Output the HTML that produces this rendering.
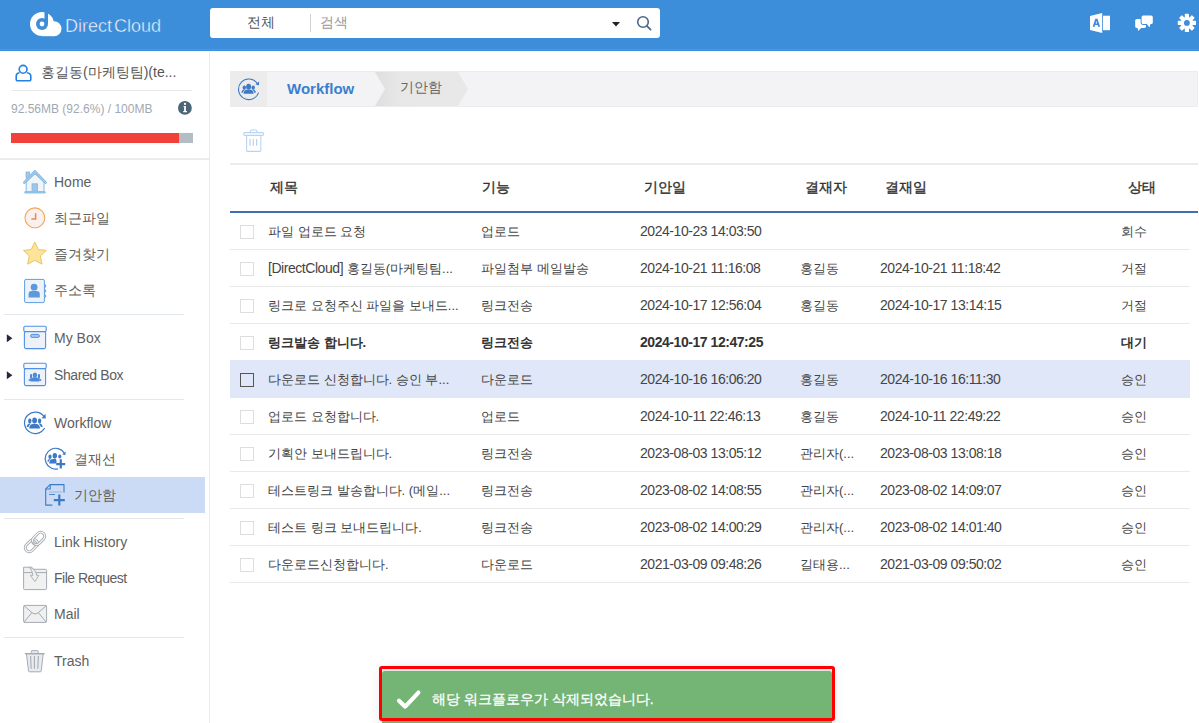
<!DOCTYPE html>
<html><head><meta charset="utf-8">
<style>
*{box-sizing:border-box}
html,body{margin:0;padding:0}
body{width:1199px;height:723px;overflow:hidden;position:relative;background:#fff;font-family:"Liberation Sans",sans-serif;color:#555}
.a{position:absolute}
svg{display:block}
#hdr{left:0;top:0;width:1199px;height:51px;background:#3c8dda}
#search{left:210px;top:8px;width:450px;height:30px;background:#fff;border-radius:3px}
.nw{white-space:nowrap;line-height:1}
#side{left:0;top:51px;width:210px;height:672px;border-right:1px solid #e9eaee}
.sep{position:absolute;height:1px;background:#e3e8ef}
.mi{position:absolute;left:54px;font-size:14px;color:#606060;white-space:nowrap;line-height:16px}
.row{position:absolute;left:230px;width:960px;height:37px;border-bottom:1px solid #e8e8e8}
.cell{position:absolute;top:11px;font-size:13px;color:#444;white-space:nowrap;line-height:15px}
.cb{position:absolute;left:240px;width:14px;height:14px;border:1px solid #dcdcdc;background:#fff}
.d{font-size:14px;letter-spacing:-0.45px}
.th{position:absolute;top:179px;font-size:14px;font-weight:normal;-webkit-text-stroke:0.4px #333;color:#333;white-space:nowrap;line-height:16px}
</style></head><body>

<!-- HEADER -->
<div id="hdr" class="a"></div>
<div class="a" style="left:0;top:49px;width:1199px;height:1px;background:#4b98de"></div>
<!-- logo -->
<svg class="a" style="left:0;top:0" width="70" height="50" viewBox="0 0 70 50">
  <g fill="#fff"><circle cx="42" cy="24" r="12"/><circle cx="54" cy="28.8" r="7.5"/><rect x="42" y="28" width="12" height="8.2"/></g>
  <rect x="44.5" y="8" width="3.5" height="16" fill="#3d8dda"/>
  <circle cx="42" cy="24" r="6" fill="#3d8dda"/>
  <circle cx="42" cy="24" r="2.4" fill="#fff"/>
</svg>
<div class="a nw" style="left:65px;top:17px;font-size:18px;color:#fff;letter-spacing:0px;-webkit-text-stroke:0.5px #3c8dda">Direct<span style="margin-left:2px"></span>Cloud</div>
<div id="search" class="a"></div>
<div class="a nw" style="left:247px;top:15px;font-size:14px;color:#555">전체</div>
<div class="a" style="left:310px;top:14px;width:1px;height:18px;background:#d0d0d0"></div>
<div class="a nw" style="left:320px;top:15px;font-size:14px;color:#999">검색</div>
<svg class="a" style="left:611px;top:21px" width="10" height="6" viewBox="0 0 10 6"><path d="M1 1 L9 1 L5 5.5Z" fill="#222"/></svg>
<svg class="a" style="left:635px;top:14px" width="18" height="18" viewBox="0 0 18 18"><circle cx="8" cy="8" r="5.3" fill="none" stroke="#4b6687" stroke-width="1.6"/><path d="M11.8 11.8 L15.6 15.6" stroke="#4b6687" stroke-width="1.7" stroke-linecap="round"/></svg>
<!-- right icons -->
<svg class="a" style="left:1089px;top:12px" width="22" height="22" viewBox="0 0 22 22">
  <path d="M1 3.9 L13.2 1 L13.2 20.9 L1 18Z" fill="#fff"/>
  <rect x="14" y="3.7" width="7" height="14.5" fill="#fff"/>
  <path fill-rule="evenodd" d="M3.7 14.7 L6.3 6.8 L8.5 6.8 L11.1 14.7 L9.1 14.7 L8.6 13 L6.2 13 L5.7 14.7Z M6.7 11.4 L8.1 11.4 L7.4 9Z" fill="#3c8dda"/>
</svg>
<svg class="a" style="left:1134px;top:14px" width="22" height="20" viewBox="0 0 22 20">
  <rect x="1.2" y="5" width="10.8" height="8.9" rx="1.6" fill="#fff"/>
  <path d="M3.4 13.5 L4.3 17 L7.6 13.5Z" fill="#fff"/>
  <rect x="6.6" y="0.5" width="13.2" height="10.5" rx="2.4" fill="#3c8dda"/>
  <path d="M11.2 9.5 L15.6 15 L17.6 9.5Z" fill="#3c8dda"/>
  <rect x="7.6" y="1.5" width="11.2" height="8.5" rx="1.6" fill="#fff"/>
  <path d="M12.4 9.6 L15.5 13.4 L16.6 9.6Z" fill="#fff"/>
</svg>
<svg class="a" style="left:1177px;top:13px" width="20" height="20" viewBox="0 0 20 20">
  <g fill="#fff" transform="translate(-0.1 -0.1)">
  <circle cx="10" cy="10" r="6.2"/>
  <rect x="7.9" y="0.9" width="4.2" height="4" rx="0.6"/>
  <rect x="7.9" y="15.1" width="4.2" height="4" rx="0.6"/>
  <rect x="0.9" y="7.9" width="4" height="4.2" rx="0.6"/>
  <rect x="15.1" y="7.9" width="4" height="4.2" rx="0.6"/>
  <rect x="7.9" y="0.9" width="4.2" height="4" rx="0.6" transform="rotate(45 10 10)"/>
  <rect x="7.9" y="15.1" width="4.2" height="4" rx="0.6" transform="rotate(45 10 10)"/>
  <rect x="0.9" y="7.9" width="4" height="4.2" rx="0.6" transform="rotate(45 10 10)"/>
  <rect x="15.1" y="7.9" width="4" height="4.2" rx="0.6" transform="rotate(45 10 10)"/>
  </g>
  <circle cx="9.9" cy="9.9" r="2.9" fill="#3c8dda"/>
</svg>

<!-- SIDEBAR -->
<div id="side" class="a"></div>
<!-- user -->
<svg class="a" style="left:10px;top:60px" width="30" height="30" viewBox="0 0 30 30">
  <circle cx="13.1" cy="9.3" r="3.9" fill="none" stroke="#2281e0" stroke-width="1.6"/>
  <path d="M9.5 12.8 Q6.2 13.2 6.2 16.2 L6.2 19.4 Q6.2 20.8 7.8 20.8 L19.2 20.8 Q20.8 20.8 20.8 19.4 L20.8 16.2 Q20.8 13.2 16.8 12.8" fill="none" stroke="#2281e0" stroke-width="1.6" stroke-linejoin="round"/>
</svg>
<div class="a nw" style="left:41px;top:64px;font-size:14px;color:#555;line-height:16px">홍길동(마케팅팀)(te...</div>
<div class="sep" style="left:12px;top:90px;width:180px;background:#e8e8e8"></div>
<div class="a nw" style="left:11px;top:102px;font-size:12px;color:#9fa9b4;line-height:14px">92.56MB (92.6%) / 100MB</div>
<svg class="a" style="left:177px;top:100px" width="16" height="16" viewBox="0 0 16 16">
  <circle cx="7.9" cy="7.9" r="6.9" fill="#4b6677"/>
  <circle cx="8" cy="3.9" r="1.1" fill="#fff"/>
  <path d="M6.6 6 L8.9 6 L8.9 11 L9.9 11 L9.9 12.2 L6.2 12.2 L6.2 11 L7.1 11 L7.1 7.1 L6.6 7.1Z" fill="#fff"/>
</svg>
<div class="a" style="left:11px;top:133px;width:182px;height:10px;background:#b4bcc4"></div>
<div class="a" style="left:11px;top:133px;width:168px;height:10px;background:#f2403a"></div>
<div class="a" style="left:0;top:158px;width:209px;height:2px;background:#eaebef"></div>

<!-- menu group 1 -->
<svg class="a" style="left:20px;top:166px" width="30" height="30" viewBox="0 0 30 30">
  <path d="M6.2 16 L6.2 25.5 L24 25.5 L24 16 L15 8Z" fill="#eff5fa" stroke="#86b8e2" stroke-width="1"/>
  <rect x="6" y="6" width="3.7" height="6" fill="#a3c9ea" stroke="#86b8e2" stroke-width="0.8"/>
  <path d="M4.3 16.6 L14.9 5.3 L25.6 16.6" fill="none" stroke="#86b8e2" stroke-width="2.6" stroke-linecap="round" stroke-linejoin="round"/>
  <path d="M4.3 16.6 L14.9 5.3 L25.6 16.6" fill="none" stroke="#b0d2ee" stroke-width="1" stroke-linecap="round" stroke-linejoin="round"/>
  <rect x="12" y="17.8" width="5.6" height="7.4" fill="#9ec6ea" stroke="#86b8e2" stroke-width="0.8"/>
  <rect x="4.3" y="25" width="21.4" height="2.6" rx="1.3" fill="#8fc0e6"/>
</svg>
<div class="mi" style="top:174px">Home</div>
<svg class="a" style="left:20px;top:202px" width="30" height="30" viewBox="0 0 30 30">
  <circle cx="14.9" cy="15.8" r="9.9" fill="#faf1ec" stroke="#f1a660" stroke-width="1.1"/>
  <path d="M15.6 11.2 L15.6 17 L11.4 17" fill="none" stroke="#e8845e" stroke-width="1.5"/>
</svg>
<div class="mi" style="top:210px">최근파일</div>
<svg class="a" style="left:20px;top:238px" width="30" height="30" viewBox="0 0 30 30">
  <path d="M14.8 4.2 L18.4 11.6 L26.3 12.4 L20.3 17.9 L22 26.2 L14.8 22.4 L7.6 26.2 L9.3 17.9 L3.4 12.4 L11.2 11.6Z" fill="#fee49a" stroke="#e9c660" stroke-width="1" stroke-linejoin="round"/>
</svg>
<div class="mi" style="top:246px">즐겨찾기</div>
<svg class="a" style="left:20px;top:275px" width="30" height="30" viewBox="0 0 30 30">
  <rect x="4.6" y="4.4" width="19.8" height="23.2" rx="1.5" fill="#eef3fa" stroke="#5e9de2" stroke-width="1"/>
  <path d="M24.6 9.5 q1.2 0 1.2 1.5 q0 1.5 -1.2 1.5 M24.6 14.5 q1.2 0 1.2 1.5 q0 1.5 -1.2 1.5 M24.6 19.5 q1.2 0 1.2 1.5 q0 1.5 -1.2 1.5" fill="none" stroke="#5e9de2" stroke-width="1"/>
  <circle cx="14.1" cy="12.2" r="3.4" fill="#5b98dc"/>
  <path d="M8.6 22.4 L8.6 19 Q8.6 16 11.6 16 L16.6 16 Q19.8 16 19.8 19 L19.8 22.4Z" fill="#5b98dc"/>
</svg>
<div class="mi" style="top:282px">주소록</div>
<div class="sep" style="left:4px;top:314px;width:180px"></div>

<!-- group 2 -->
<svg class="a" style="left:6px;top:334px" width="7" height="9" viewBox="0 0 7 9"><path d="M0.8 0.3 L6.4 4.3 L0.8 8.3Z" fill="#232a36"/></svg>
<svg class="a" style="left:20px;top:322px" width="30" height="30" viewBox="0 0 30 30">
  <rect x="4.4" y="9.4" width="21.2" height="17.2" rx="1.6" fill="#eef2f8" stroke="#4f92e2" stroke-width="1.1"/>
  <rect x="3.8" y="4.2" width="22.4" height="5.4" rx="1.4" fill="#f5f7fb" stroke="#4f92e2" stroke-width="1.1"/>
  <rect x="10.6" y="12.4" width="8.8" height="3" rx="1.5" fill="#a8c6ec" stroke="#4f92e2" stroke-width="1"/>
</svg>
<div class="mi" style="top:330px">My Box</div>
<svg class="a" style="left:6px;top:371px" width="7" height="9" viewBox="0 0 7 9"><path d="M0.8 0.3 L6.4 4.3 L0.8 8.3Z" fill="#232a36"/></svg>
<svg class="a" style="left:20px;top:359px" width="30" height="30" viewBox="0 0 30 30">
  <rect x="4.4" y="9.4" width="21.2" height="17.2" rx="1.6" fill="#eef2f8" stroke="#4f92e2" stroke-width="1.1"/>
  <rect x="3.8" y="4.2" width="22.4" height="5.4" rx="1.4" fill="#f5f7fb" stroke="#4f92e2" stroke-width="1.1"/>
  <g fill="#4a8ad8">
    <ellipse cx="14.9" cy="16.1" rx="2.2" ry="2.5"/><path d="M10.2 22.6 L10.2 21.2 Q10.6 18.6 13.4 18.2 L16.4 18.2 Q19.2 18.6 19.6 21.2 L19.6 22.6Z"/>
    <rect x="10" y="15" width="2.1" height="4.4" rx="1"/><path d="M8.4 21.6 Q8.6 19.8 10.6 19.2 L11.4 20.4 Q9.8 20.8 9.6 22Z"/>
    <rect x="17.9" y="15" width="2.1" height="4.4" rx="1"/><path d="M21.6 21.6 Q21.4 19.8 19.4 19.2 L18.6 20.4 Q20.2 20.8 20.4 22Z"/>
  </g>
</svg>
<div class="mi" style="top:367px;letter-spacing:-0.4px">Shared Box</div>
<div class="sep" style="left:4px;top:399px;width:180px"></div>

<!-- group 3 -->
<svg class="a" style="left:20px;top:408px" width="30" height="30" viewBox="0 0 30 30">
  <path d="M24.6 20 A10.7 10.7 0 1 1 24.2 9" fill="none" stroke="#3c7ac8" stroke-width="1.2"/>
  <path d="M25.4 5.8 L25.8 10.6 L21.6 10.2Z" fill="#3c7ac8"/>
  <g fill="#3c7ac8">
    <ellipse cx="14.6" cy="12.6" rx="2.4" ry="3"/><path d="M9.2 20.5 Q9.4 16.2 13 16 L16.2 16 Q19.8 16.2 20 20.5Z"/>
    <ellipse cx="9.8" cy="13" rx="1.7" ry="2.4"/><path d="M6.8 19 Q7 16 9.6 15.6 L10.8 15.8 Q8.8 17 8.6 19Z"/>
    <ellipse cx="19.6" cy="13" rx="1.7" ry="2.4"/><path d="M22.6 19 Q22.4 16 19.8 15.6 L18.6 15.8 Q20.6 17 20.8 19Z"/>
  </g>
</svg>
<div class="mi" style="top:415px">Workflow</div>
<svg class="a" style="left:40px;top:444px" width="30" height="30" viewBox="0 0 30 30">
  <path d="M18 24.8 A10.4 10.4 0 1 1 24.2 8.8" fill="none" stroke="#3c7ac8" stroke-width="1.2"/>
  <path d="M25.8 7.6 L25.2 11.2 L22.2 10.2Z" fill="#3c7ac8"/>
  <g fill="#3c7ac8">
    <ellipse cx="14.8" cy="11.8" rx="2.2" ry="2.8"/><path d="M9.2 19.4 Q9.4 15.2 13 15 L15.6 15 Q16.8 15.4 16.4 19.4Z"/>
    <ellipse cx="10" cy="12.8" rx="1.6" ry="2.2"/><path d="M7.2 17.6 Q7.4 15.2 9.8 15 L10.6 15.4 Q9 16.2 8.6 17.8Z"/>
    <ellipse cx="19.8" cy="12.4" rx="1.6" ry="2"/>
  </g>
  <path d="M20.8 15.2 L20.8 24.6 M16.2 20.1 L25.2 20.1" stroke="#3c7ac8" stroke-width="2.2"/>
</svg>
<div class="mi" style="top:451px;left:74px">결재선</div>
<div class="a" style="left:0;top:477px;width:205px;height:36px;background:#cbdbf6"></div>
<svg class="a" style="left:40px;top:480px" width="30" height="30" viewBox="0 0 30 30">
  <path d="M12.4 25.1 L5.7 25.1 L5.7 8.9 L10.2 4.6 L24 4.6 L24 12.5" fill="none" stroke="#3c7ac8" stroke-width="1.1" stroke-linejoin="round"/>
  <path d="M10.2 4.6 L10.2 9 L5.7 9" fill="none" stroke="#3c7ac8" stroke-width="1.1"/>
  <path d="M9 12 L22 12" stroke="#9ebfe6" stroke-width="1.2"/>
  <path d="M9 14.5 L15 14.5" stroke="#3c7ac8" stroke-width="0.9"/>
  <path d="M19.3 14.6 L19.3 25.6 M13.8 20.1 L24.8 20.1" stroke="#3c7ac8" stroke-width="2.2"/>
</svg>
<div class="mi" style="top:487px;left:74px">기안함</div>
<div class="sep" style="left:4px;top:518px;width:180px"></div>

<!-- group 4 -->
<svg class="a" style="left:20px;top:527px" width="30" height="30" viewBox="0 0 30 30">
  <g transform="rotate(-45 15 15)" fill="none">
    <rect x="2.9" y="11" width="14" height="8" rx="4" stroke="#aab0b7" stroke-width="3"/>
    <rect x="2.9" y="11" width="14" height="8" rx="4" stroke="#fbfbfb" stroke-width="1.2"/>
    <rect x="13.1" y="11" width="14" height="8" rx="4" stroke="#aab0b7" stroke-width="3"/>
    <rect x="13.1" y="11" width="14" height="8" rx="4" stroke="#fbfbfb" stroke-width="1.2"/>
    <path d="M13.1 13 L13.1 17" stroke="#aab0b7" stroke-width="1"/>
  </g>
</svg>
<div class="mi" style="top:534px">Link History</div>
<svg class="a" style="left:20px;top:563px" width="30" height="30" viewBox="0 0 30 30">
  <path d="M3.6 4.2 L11.6 4.2 L13.8 6.3 L25.6 6.3 Q26.6 6.3 26.6 7.3 L26.6 25.6 Q26.6 26.6 25.6 26.6 L4.6 26.6 Q3.6 26.6 3.6 25.6Z" fill="#f1f1f1" stroke="#a4aab2" stroke-width="1"/>
  <path d="M3.6 9.6 L26.6 9.6" stroke="#a4aab2" stroke-width="1"/>
  <path d="M9.5 4.4 Q15.5 5.5 16.6 12.3 L18.8 12.3 L14.9 18.6 L10.3 12.3 L12.9 12.3 Q12.4 7.4 9.5 4.4Z" fill="#f1f1f1" stroke="#a4aab2" stroke-width="0.9" stroke-linejoin="round"/>
</svg>
<div class="mi" style="top:570px;letter-spacing:-0.5px">File Request</div>
<svg class="a" style="left:20px;top:599px" width="30" height="30" viewBox="0 0 30 30">
  <rect x="3.6" y="6.4" width="23" height="17" rx="1" fill="#f0f0f0" stroke="#a4aab2" stroke-width="1"/>
  <path d="M4 6.8 L12.4 14 Q15.1 16.2 17.8 14 L26.2 6.8 M4.2 23 L11.8 13.6 M26 23 L18.4 13.6" fill="none" stroke="#a4aab2" stroke-width="1"/>
</svg>
<div class="mi" style="top:606px">Mail</div>
<div class="sep" style="left:4px;top:637px;width:180px"></div>
<svg class="a" style="left:20px;top:646px" width="30" height="30" viewBox="0 0 30 30">
  <path d="M10.8 7.6 L11.6 4.6 L17.8 4.6 L18.8 7.6Z" fill="#e4e7eb" stroke="#a6acb4" stroke-width="0.9"/>
  <path d="M6.4 7.8 L8.6 25.2 Q8.8 25.8 9.6 25.8 L20.2 25.8 Q21 25.8 21.2 25.2 L23.2 7.8Z" fill="#e8ebef" stroke="#a6acb4" stroke-width="1"/>
  <path d="M5.4 7.6 L24.2 7.6" stroke="#a6acb4" stroke-width="1.4" stroke-linecap="round"/>
  <path d="M10.6 10 L11.2 22.8 M14.4 10 L14.4 22.8 M18.4 10 L17.8 22.8" stroke="#a6acb4" stroke-width="1.1"/>
</svg>
<div class="mi" style="top:653px">Trash</div>

<!-- MAIN -->
<div class="a" style="left:230px;top:71px;width:968px;height:36px;background:#f3f3f5;border:1px solid #ededef"></div>
<div class="a" style="left:230px;top:71px;width:37px;height:36px;background:#ececec"></div>
<svg class="a" style="left:230px;top:71px" width="37" height="36" viewBox="0 0 37 36">
  <path d="M28.6 21.6 A10.3 10.3 0 1 1 27.4 12.6" fill="none" stroke="#3c7ac8" stroke-width="1.1"/>
  <path d="M29.2 10.6 L28.8 14.6 L25.4 13.2Z" fill="#3c7ac8"/>
  <g fill="#3c7ac8">
    <ellipse cx="18.6" cy="15.8" rx="2.5" ry="3"/><path d="M13.6 22.8 Q13.8 19 17 18.8 L20.2 18.8 Q23.4 19 23.6 22.8Z"/>
    <ellipse cx="14.3" cy="16.6" rx="1.7" ry="2.2"/><path d="M11.3 21.6 Q11.6 19 14 18.6 L15 18.8 Q13.2 19.8 13 21.8Z"/>
    <ellipse cx="23.2" cy="16.6" rx="1.7" ry="2.2"/><path d="M26 21.6 Q25.7 19 23.3 18.6 L22.3 18.8 Q24.1 19.8 24.3 21.8Z"/>
  </g>
</svg>
<div class="a nw" style="left:287px;top:80px;font-size:15px;font-weight:bold;color:#3b7fcf;line-height:17px">Workflow</div>
<svg class="a" style="left:374px;top:71px" width="96" height="36" viewBox="0 0 96 36">
  <defs><linearGradient id="bcg" x1="0" x2="1" y1="0" y2="0"><stop offset="0" stop-color="#dedede"/><stop offset="0.25" stop-color="#e7e7e7"/><stop offset="1" stop-color="#e8e8e8"/></linearGradient></defs>
  <path d="M1 1 L84 1 L94 18 L84 35 L1 35 L11 18Z" fill="url(#bcg)"/>
</svg>
<div class="a nw" style="left:400px;top:79px;font-size:14px;color:#666;line-height:16px">기안함</div>
<svg class="a" style="left:238px;top:122px" width="30" height="36" viewBox="0 0 30 36">
  <g fill="none" stroke="#b9d3f2" stroke-width="1.1">
    <rect x="12.4" y="8" width="6.4" height="2.8" rx="1"/>
    <rect x="5.6" y="10.6" width="20" height="2.8" rx="1.4" fill="#fff"/>
    <path d="M8.6 13.4 L8.6 28.6 Q8.6 29.4 9.4 29.4 L22 29.4 Q22.8 29.4 22.8 28.6 L22.8 13.4"/>
    <path d="M12 17 L12 23.8 M15.3 17 L15.3 23.8 M18.6 17 L18.6 23.8" stroke-width="1.2"/>
  </g>
</svg>
<div class="a" style="left:230px;top:163px;width:968px;height:2px;background:#ebebed"></div>
<div class="th" style="left:270px">제목</div>
<div class="th" style="left:482px">기능</div>
<div class="th" style="left:644px">기안일</div>
<div class="th" style="left:805px">결재자</div>
<div class="th" style="left:885px">결재일</div>
<div class="th" style="left:1128px">상태</div>
<div class="a" style="left:230px;top:211px;width:968px;height:2px;background:#3d6fb2"></div>
<div class="a" style="left:230px;top:249px;width:960px;height:1px;background:#e9e9e9"></div>
<div class="a" style="left:240px;top:225px;width:14px;height:14px;border:1px solid #dedede;background:#fff"></div>
<div class="cell" style="left:268px;top:224px;">파일 업로드 요청</div>
<div class="cell" style="left:481px;top:224px;">업로드</div>
<div class="cell" style="left:640px;top:224px;"><span class="d">2024-10-23 14:03:50</span></div>
<div class="cell" style="left:1121px;top:224px;">회수</div>
<div class="a" style="left:230px;top:286px;width:960px;height:1px;background:#e9e9e9"></div>
<div class="a" style="left:240px;top:262px;width:14px;height:14px;border:1px solid #dedede;background:#fff"></div>
<div class="cell" style="left:268px;top:261px;"><span class="d">[DirectCloud]</span> 홍길동(마케팅팀...</div>
<div class="cell" style="left:481px;top:261px;">파일첨부 메일발송</div>
<div class="cell" style="left:640px;top:261px;"><span class="d">2024-10-21 11:16:08</span></div>
<div class="cell" style="left:800px;top:261px;">홍길동</div>
<div class="cell" style="left:880px;top:261px;"><span class="d">2024-10-21 11:18:42</span></div>
<div class="cell" style="left:1121px;top:261px;">거절</div>
<div class="a" style="left:230px;top:323px;width:960px;height:1px;background:#e9e9e9"></div>
<div class="a" style="left:240px;top:299px;width:14px;height:14px;border:1px solid #dedede;background:#fff"></div>
<div class="cell" style="left:268px;top:298px;">링크로 요청주신 파일을 보내드...</div>
<div class="cell" style="left:481px;top:298px;">링크전송</div>
<div class="cell" style="left:640px;top:298px;"><span class="d">2024-10-17 12:56:04</span></div>
<div class="cell" style="left:800px;top:298px;">홍길동</div>
<div class="cell" style="left:880px;top:298px;"><span class="d">2024-10-17 13:14:15</span></div>
<div class="cell" style="left:1121px;top:298px;">거절</div>
<div class="a" style="left:230px;top:360px;width:960px;height:1px;background:#e9e9e9"></div>
<div class="a" style="left:240px;top:336px;width:14px;height:14px;border:1px solid #dedede;background:#fff"></div>
<div class="cell" style="left:268px;top:335px;font-weight:bold;color:#333;">링크발송 합니다.</div>
<div class="cell" style="left:481px;top:335px;font-weight:bold;color:#333;">링크전송</div>
<div class="cell" style="left:640px;top:335px;font-weight:bold;color:#333;"><span class="d">2024-10-17 12:47:25</span></div>
<div class="cell" style="left:1121px;top:335px;font-weight:bold;color:#333;">대기</div>
<div class="a" style="left:230px;top:360px;width:960px;height:38px;background:#dfe7f8"></div>
<div class="a" style="left:240px;top:373px;width:14px;height:14px;border:1px solid #555;background:transparent"></div>
<div class="cell" style="left:268px;top:372px;">다운로드 신청합니다. 승인 부...</div>
<div class="cell" style="left:481px;top:372px;">다운로드</div>
<div class="cell" style="left:640px;top:372px;"><span class="d">2024-10-16 16:06:20</span></div>
<div class="cell" style="left:800px;top:372px;">홍길동</div>
<div class="cell" style="left:880px;top:372px;"><span class="d">2024-10-16 16:11:30</span></div>
<div class="cell" style="left:1121px;top:372px;">승인</div>
<div class="a" style="left:230px;top:434px;width:960px;height:1px;background:#e9e9e9"></div>
<div class="a" style="left:240px;top:410px;width:14px;height:14px;border:1px solid #dedede;background:#fff"></div>
<div class="cell" style="left:268px;top:409px;">업로드 요청합니다.</div>
<div class="cell" style="left:481px;top:409px;">업로드</div>
<div class="cell" style="left:640px;top:409px;"><span class="d">2024-10-11 22:46:13</span></div>
<div class="cell" style="left:800px;top:409px;">홍길동</div>
<div class="cell" style="left:880px;top:409px;"><span class="d">2024-10-11 22:49:22</span></div>
<div class="cell" style="left:1121px;top:409px;">승인</div>
<div class="a" style="left:230px;top:471px;width:960px;height:1px;background:#e9e9e9"></div>
<div class="a" style="left:240px;top:447px;width:14px;height:14px;border:1px solid #dedede;background:#fff"></div>
<div class="cell" style="left:268px;top:446px;">기획안 보내드립니다.</div>
<div class="cell" style="left:481px;top:446px;">링크전송</div>
<div class="cell" style="left:640px;top:446px;"><span class="d">2023-08-03 13:05:12</span></div>
<div class="cell" style="left:800px;top:446px;">관리자(...</div>
<div class="cell" style="left:880px;top:446px;"><span class="d">2023-08-03 13:08:18</span></div>
<div class="cell" style="left:1121px;top:446px;">승인</div>
<div class="a" style="left:230px;top:508px;width:960px;height:1px;background:#e9e9e9"></div>
<div class="a" style="left:240px;top:484px;width:14px;height:14px;border:1px solid #dedede;background:#fff"></div>
<div class="cell" style="left:268px;top:483px;">테스트링크 발송합니다. (메일...</div>
<div class="cell" style="left:481px;top:483px;">링크전송</div>
<div class="cell" style="left:640px;top:483px;"><span class="d">2023-08-02 14:08:55</span></div>
<div class="cell" style="left:800px;top:483px;">관리자(...</div>
<div class="cell" style="left:880px;top:483px;"><span class="d">2023-08-02 14:09:07</span></div>
<div class="cell" style="left:1121px;top:483px;">승인</div>
<div class="a" style="left:230px;top:545px;width:960px;height:1px;background:#e9e9e9"></div>
<div class="a" style="left:240px;top:521px;width:14px;height:14px;border:1px solid #dedede;background:#fff"></div>
<div class="cell" style="left:268px;top:520px;">테스트 링크 보내드립니다.</div>
<div class="cell" style="left:481px;top:520px;">링크전송</div>
<div class="cell" style="left:640px;top:520px;"><span class="d">2023-08-02 14:00:29</span></div>
<div class="cell" style="left:800px;top:520px;">관리자(...</div>
<div class="cell" style="left:880px;top:520px;"><span class="d">2023-08-02 14:01:40</span></div>
<div class="cell" style="left:1121px;top:520px;">승인</div>
<div class="a" style="left:230px;top:582px;width:960px;height:1px;background:#e9e9e9"></div>
<div class="a" style="left:240px;top:558px;width:14px;height:14px;border:1px solid #dedede;background:#fff"></div>
<div class="cell" style="left:268px;top:557px;">다운로드신청합니다.</div>
<div class="cell" style="left:481px;top:557px;">다운로드</div>
<div class="cell" style="left:640px;top:557px;"><span class="d">2021-03-09 09:48:26</span></div>
<div class="cell" style="left:800px;top:557px;">길태용...</div>
<div class="cell" style="left:880px;top:557px;"><span class="d">2021-03-09 09:50:02</span></div>
<div class="cell" style="left:1121px;top:557px;">승인</div>

<!-- TOAST -->
<div class="a" style="left:382px;top:669px;width:450px;height:60px;border-radius:3px;box-shadow:0 0 14px rgba(0,0,0,0.13);background:#e4e6e8"></div>
<div class="a" style="left:382px;top:671px;width:450px;height:60px;border-radius:3px;background:#74b474"></div>
<svg class="a" style="left:394px;top:687px" width="30" height="24" viewBox="0 0 30 24">
  <path d="M5 13.8 L11.2 19.6 L24.4 5.6" fill="none" stroke="#fff" stroke-width="4.2" stroke-linecap="round" stroke-linejoin="round"/>
</svg>
<div class="a nw" style="left:432px;top:691px;font-size:14px;color:#fff;line-height:16px;-webkit-text-stroke:0.3px #fff">해당 워크플로우가 삭제되었습니다.</div>
<div class="a" style="left:379px;top:666px;width:456px;height:55px;border:3px solid #ff0000;border-radius:3px"></div>

</body></html>
